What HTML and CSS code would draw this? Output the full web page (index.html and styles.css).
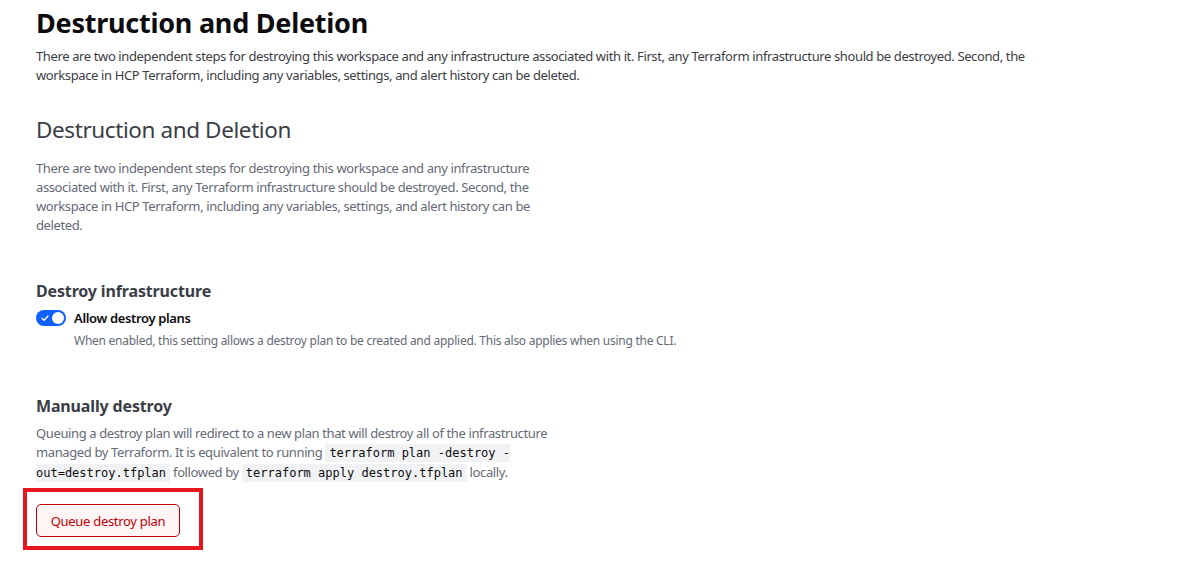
FILE: index.html
```html
<!DOCTYPE html>
<html>
<head>
<meta charset="utf-8">
<link rel="stylesheet" href="styles.css">
</head>
<body>
<main class="page">
  <h1 class="title">Destruction and Deletion</h1>
  <p class="lead">There are two independent steps for destroying this workspace and any infrastructure associated with it. First, any Terraform infrastructure should be destroyed. Second, the workspace in HCP Terraform, including any variables, settings, and alert history can be deleted.</p>

  <h2 class="subtitle">Destruction and Deletion</h2>
  <p class="desc">There are two independent steps for destroying this workspace and any infrastructure associated with it. First, any Terraform infrastructure should be destroyed. Second, the workspace in HCP Terraform, including any variables, settings, and alert history can be deleted.</p>

  <section class="block infra">
    <h3 class="section-title">Destroy infrastructure</h3>
    <div class="toggle-row">
      <span class="toggle">
        <svg class="check" width="10" height="10" viewBox="0 0 10 10"><path d="M2 5.2 L4.1 7.2 L8 3" fill="none" stroke="#fff" stroke-width="1.4" stroke-linecap="round" stroke-linejoin="round"/></svg>
        <span class="knob"></span>
      </span>
      <span class="toggle-label">Allow destroy plans</span>
    </div>
    <p class="helper">When enabled, this setting allows a destroy plan to be created and applied. This also applies when using the CLI.</p>
  </section>

  <section class="block manual">
    <h3 class="section-title">Manually destroy</h3>
    <p class="manual-text">Queuing a destroy plan will redirect to a new plan that will destroy all of the infrastructure managed by Terraform. It is equivalent to running <code>terraform plan -destroy -out=destroy.tfplan</code> followed by <code>terraform apply destroy.tfplan</code> locally.</p>
    <div class="highlight">
      <button class="danger-btn">Queue destroy plan</button>
    </div>
  </section>
</main>
</body>
</html>
```
FILE: styles.css
```css
* { box-sizing: border-box; }
html, body { margin: 0; padding: 0; background: #fff; }
body {
  font-family: "Noto Sans", "Open Sans", sans-serif;
  color: #3b3d45;
}
.page {
  padding: 0 36px;
}
.title {
  margin: 0;
  padding-top: 5px;
  font-size: 27px;
  line-height: 36px;
  font-weight: 700;
  letter-spacing: -0.25px;
  color: #0c0c0e;
}
.lead {
  margin: 6px 0 0;
  font-size: 13px;
  line-height: 19px;
  letter-spacing: -0.38px;
  color: #3b3d45;
  max-width: 1010px;
}
.subtitle {
  margin: 29px 0 0;
  font-size: 22.5px;
  line-height: 32px;
  font-weight: 400;
  letter-spacing: -0.4px;
  color: #3b3d45;
}
.desc {
  margin: 13px 0 0;
  font-size: 13px;
  line-height: 19px;
  letter-spacing: -0.38px;
  color: #656a76;
  max-width: 505px;
}
.block { margin: 0; }
.infra { margin-top: 44px; }
.section-title {
  margin: 0;
  font-size: 16px;
  line-height: 24px;
  font-weight: 700;
  letter-spacing: -0.15px;
  color: #3b3d45;
}
.toggle-row {
  display: flex;
  align-items: center;
  gap: 8px;
  margin-top: 5px;
  height: 20px;
}
.toggle {
  position: relative;
  display: inline-flex;
  align-items: center;
  width: 30px;
  height: 16px;
  border-radius: 8px;
  background: #1060ff;
}
.check { position: absolute; left: 4px; top: 3px; }
.knob {
  position: absolute;
  right: 2px;
  top: 2px;
  width: 12px;
  height: 12px;
  border-radius: 50%;
  background: #fff;
}
.toggle-label {
  font-size: 13px;
  font-weight: 600;
  letter-spacing: -0.35px;
  color: #0c0c0e;
}
.helper {
  margin: 4px 0 0 38px;
  font-size: 12px;
  line-height: 18px;
  letter-spacing: -0.26px;
  color: #656a76;
}
.manual { margin-top: 44px; }
.manual-text {
  margin: 6px 0 0;
  font-size: 13px;
  line-height: 19px;
  letter-spacing: -0.38px;
  color: #656a76;
  max-width: 530px;
}
.manual-text code {
  font-family: "DejaVu Sans Mono", monospace;
  font-size: 12px;
  letter-spacing: 0;
  color: #0c0c0e;
  background: #f1f2f3;
  padding: 2px 4px;
}
.highlight {
  margin: 5px 0 0 -13px;
  width: 180px;
  height: 62px;
  border: 4px solid #e5161d;
  padding: 12px 0 0 9px;
}
.danger-btn {
  width: 144px;
  height: 33px;
  border: 1px solid #c00005;
  border-radius: 5px;
  background: #fff5f5;
  color: #c00005;
  font-family: "Noto Sans", sans-serif;
  font-size: 13px;
  letter-spacing: -0.3px;
  padding: 0;
}
```
